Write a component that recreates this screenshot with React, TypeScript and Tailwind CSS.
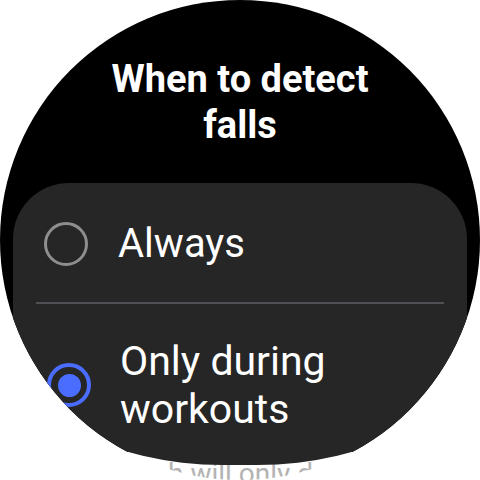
export default function App() {
  return (
    <div className="flex h-[480px] w-[480px] items-center justify-center bg-white">
      <div className="flex h-[480px] w-[480px] flex-col overflow-hidden rounded-full bg-[linear-gradient(to_bottom,#000_452px,#fff_452px)] font-['Roboto',sans-serif]">
        <h1 className="mt-[56px] text-center text-[38px] font-bold leading-[46px] text-white">
          When to detect
          <br />
          falls
        </h1>

        <div className="relative z-10 mx-[13px] mt-[35px] rounded-t-[56px] rounded-b-[210px_120px] bg-[#262626] pb-[32px] pt-[37px]">
          <div className="flex h-[48px] items-center gap-[30px] pl-[31px]">
            <span className="h-[44px] w-[44px] shrink-0 rounded-full border-[3px] border-[#8e8e8e]" />
            <span className="text-[40px] leading-[48px] text-white">Always</span>
          </div>

          <div className="mx-[23px] mt-[34px] h-[2px] bg-[#505055]" />

          <div className="mt-[33px] flex items-center gap-[29px] pl-[34px]">
            <span className="flex h-[44px] w-[44px] shrink-0 items-center justify-center rounded-full border-[4px] border-[#4a6cff]">
              <span className="h-[23px] w-[23px] rounded-full bg-[#4a6cff]" />
            </span>
            <span className="text-[41px] leading-[48px] text-white">
              Only during
              <br />
              workouts
            </span>
          </div>
        </div>

        <p className="-mt-[8px] px-[30px] text-center text-[28px] leading-[34px] text-[#b3b3b3]">
          Your watch will only detect falls during workouts.
        </p>
      </div>
    </div>
  );
}
